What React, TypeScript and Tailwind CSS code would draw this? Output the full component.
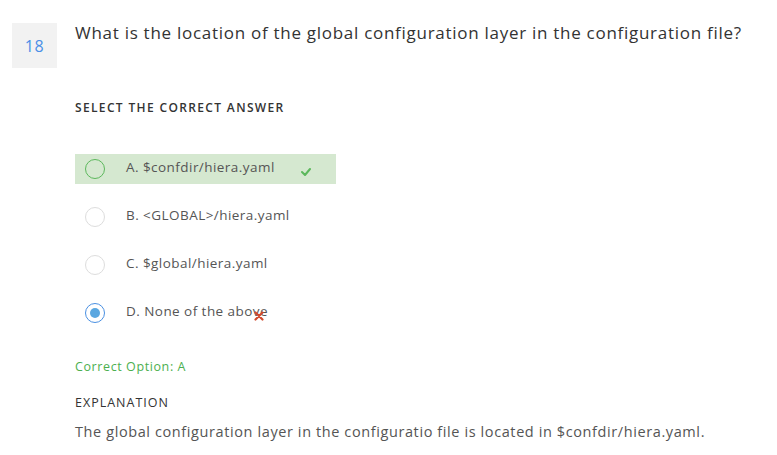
import React from 'react';

interface Option {
  label: string;
  state: 'correct' | 'wrong' | 'none';
}

const options: Option[] = [
  { label: 'A. $confdir/hiera.yaml', state: 'correct' },
  { label: 'B. <GLOBAL>/hiera.yaml', state: 'none' },
  { label: 'C. $global/hiera.yaml', state: 'none' },
  { label: 'D. None of the above', state: 'wrong' },
];

const font = { fontFamily: '"Open Sans", "Liberation Sans", sans-serif' };

const Radio: React.FC<{ state: Option['state'] }> = ({ state }) => {
  if (state === 'correct') {
    return <span className="w-5 h-5 rounded-full border-[1.5px] border-[#5cb85c] shrink-0" />;
  }
  if (state === 'wrong') {
    return (
      <span className="w-5 h-5 rounded-full border-[1.5px] border-[#4a90e2] shrink-0 flex items-center justify-center">
        <span className="w-[10px] h-[10px] rounded-full bg-[#5aa7e0]" />
      </span>
    );
  }
  return <span className="w-5 h-5 rounded-full border border-[#dddddd] shrink-0" />;
};

const App: React.FC = () => {
  return (
    <div className="w-[777px] h-[455px] bg-white text-[#333] relative" style={font}>
      <div className="flex pt-[23px] pl-3">
        <div className="w-[45px] h-[45px] bg-[#f2f2f2] flex items-center justify-center text-[16px] text-[#4a8fe7] tracking-[0.5px]">
          18
        </div>
        <div className="ml-[18px] flex-1">
          <h1 className="text-[17px] leading-5 text-[#333] tracking-[0.72px] whitespace-nowrap">
            What is the location of the global configuration layer in the configuration file?
          </h1>
          <p className="mt-[56px] text-[12px] font-semibold tracking-[1.35px] text-[#333]">
            SELECT THE CORRECT ANSWER
          </p>
        </div>
      </div>

      <div className="ml-[75px] mt-[37px] flex flex-col gap-[18px]">
        {options.map((o, i) => (
          <div
            key={i}
            className={`w-[261px] h-[30px] flex items-center pl-[10px] ${o.state === 'correct' ? 'bg-[#d5e8d0]' : ''}`}
          >
            <Radio state={o.state} />
            <span className="relative ml-[21px] text-[13.5px] text-[#555] -mt-[4px] tracking-[0.45px]">
              {o.label}
              {o.state === 'wrong' && (
                <svg className="absolute right-[4px] top-[10px]" width="10" height="10" viewBox="0 0 10 10">
                  <path d="M1.5 1.5 L8.5 8.5 M8.5 1.5 L1.5 8.5" stroke="#d14a2e" strokeWidth="2.2" strokeLinecap="round" />
                </svg>
              )}
            </span>
            {o.state === 'correct' && (
              <svg className="ml-auto mr-[25px] mt-[6px]" width="10" height="8" viewBox="0 0 10 8">
                <path d="M1 4 L4 7 L9 1" stroke="#5cb85c" strokeWidth="2" fill="none" strokeLinecap="round" strokeLinejoin="round" />
              </svg>
            )}
          </div>
        ))}
      </div>

      <div className="ml-[75px] mt-[30px]">
        <p className="text-[12.5px] text-[#4caf50] font-medium tracking-[0.6px]">Correct Option: A</p>
        <p className="mt-[17px] text-[12.5px] text-[#333] font-medium tracking-[1px]">EXPLANATION</p>
        <p className="mt-[8px] text-[14.5px] text-[#555] tracking-[0.6px] whitespace-nowrap">
          The global configuration layer in the configuratio file is located in $confdir/hiera.yaml.
        </p>
      </div>
    </div>
  );
};

export default App;
